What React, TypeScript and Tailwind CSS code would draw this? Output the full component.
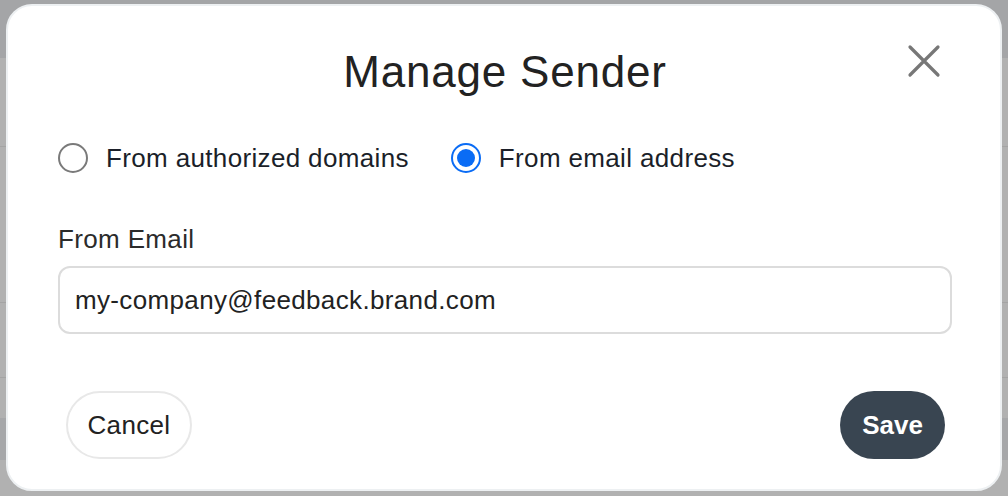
import { useState } from 'react'

const font = { fontFamily: '"Liberation Sans", Arial, sans-serif' }

function Radio({ checked, label, onClick }: { checked: boolean; label: string; onClick: () => void }) {
  return (
    <button type="button" onClick={onClick} className="flex items-center gap-[18px] h-[32px]">
      {checked ? (
        <span className="w-[30px] h-[30px] rounded-full border-2 border-[#0a6cf5] flex items-center justify-center">
          <span className="w-[18px] h-[18px] rounded-full bg-[#0a6cf5]" />
        </span>
      ) : (
        <span className="w-[30px] h-[30px] rounded-full border-2 border-[#7a7a7a]" />
      )}
      <span className="text-[26px] leading-[32px] tracking-[0.35px] text-[#1b1f29]">{label}</span>
    </button>
  )
}

export default function App() {
  const [mode, setMode] = useState<'domains' | 'email'>('email')

  return (
    <div className="relative w-[1008px] h-[496px] overflow-hidden bg-[#b1b1b1]" style={font}>
      {/* page behind the overlay */}
      <div className="flex flex-col h-full">
        <div className="h-[58px] bg-[#a4a5a7]" />
        <div className="h-[89px] border-b border-[#a4a4a4]" />
        <div className="h-[156px] border-b border-[#a4a4a4]" />
        <div className="h-[75px] border-b border-[#a4a4a4]" />
        <div className="h-[40px]" />
        <div className="h-[42px] bg-[#a6a7a9]" />
        <div className="flex-1" />
      </div>

      <div className="absolute left-[6px] top-[4px] w-[996px] h-[487px] bg-white rounded-[26px] border-2 border-[#edf0f2] flex flex-col pt-[40px] pl-[50px] pr-[48px]">
        <button type="button" className="absolute right-[59px] top-[38px] w-[34px] h-[34px] flex items-center justify-center">
          <svg width="34" height="34" viewBox="0 0 34 34" fill="none" stroke="#777777" strokeWidth="3.2" strokeLinecap="round">
            <path d="M3 3L31 31M31 3L3 31" />
          </svg>
        </button>

        <h1 className="text-center text-[44px] leading-[52px] tracking-[0.8px] text-[#222222] font-normal">Manage Sender</h1>

        <div className="flex items-center gap-[42px] mt-[44px]">
          <Radio checked={mode === 'domains'} label="From authorized domains" onClick={() => setMode('domains')} />
          <Radio checked={mode === 'email'} label="From email address" onClick={() => setMode('email')} />
        </div>

        <label className="mt-[50px] text-[26px] leading-[30px] tracking-[0.35px] text-[#2b2b2b]">From Email</label>
        <div className="mt-[12px] h-[68px] rounded-[12px] border-2 border-[#dcdcdc] flex items-center px-[15px]">
          <span className="text-[26px] tracking-[0.35px] text-[#222222]">my-company@feedback.brand.com</span>
        </div>

        <div className="mt-[57px] flex items-center justify-between pl-[8px] pr-[7px]">
          <button type="button" className="w-[126px] h-[68px] rounded-full border-2 border-[#e8e8e8] text-[26px] tracking-[0.35px] text-[#222222]">
            Cancel
          </button>
          <button type="button" className="w-[105px] h-[68px] rounded-full bg-[#394551] text-[26px] font-bold text-white">
            Save
          </button>
        </div>
      </div>
    </div>
  )
}
